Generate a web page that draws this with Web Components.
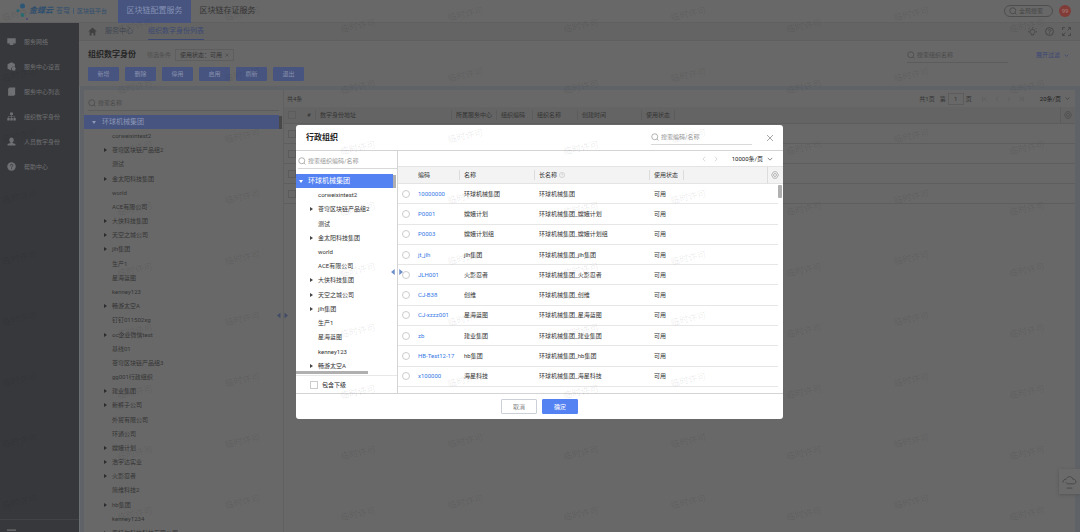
<!DOCTYPE html>
<html lang="zh-CN">
<head>
<meta charset="utf-8">
<title>组织数字身份</title>
<style>
  body { margin: 0; height: 100vh; overflow: hidden; background: #686868; color: #343434;
    font: 6px/14px Roboto, "Noto Sans CJK SC", sans-serif; }
</style>
</head>
<body>
<app-page></app-page>
<script>
const BASE = `<style>
  *, *::before { box-sizing: border-box; }
  button, input { font: inherit; color: inherit; margin: 0; padding: 0; border: 0; background: none; min-width: 0; }
  input:focus, button:focus { outline: none; }
  input[type=checkbox], input[type=radio] { appearance: none; display: block; width: 8px; height: 8px; border: 1px solid var(--box, #5c5c5c); flex: none; }
  input[type=radio] { border-radius: 50%; }
  a { color: inherit; text-decoration: none; }
  ul { list-style: none; margin: 0; padding: 0; }
  table { border-collapse: separate; border-spacing: 0; table-layout: fixed; width: 100%; }
  th, td { padding: 0; text-align: left; font-weight: 400; white-space: nowrap; }
</style>`;
const define = (name, render) => customElements.define(name, class extends HTMLElement {
  constructor() { super(); this.attachShadow({ mode: 'open' }); }
  connectedCallback() { this.shadowRoot.innerHTML = BASE + (typeof render === 'function' ? render(this) : render); }
});

const ICONS = {
  monitor: '<path fill="currentColor" d="M.5 2h15v9.500h-5l1.500 2.500H4l1.500-2.500h-5z"/>',
  cog: '<path fill="currentColor" d="M8 .5l6 3v5H9.500L7 12l1 3-7-3V4z"/><circle cx="12" cy="12" r="3.500" fill="currentColor"/>',
  doc: '<path fill="currentColor" d="M4 1h10.500v12l-2 2.500H2V3z"/>',
  org: '<path fill="currentColor" d="M5.500 1h5v4.500h-5zM.5 10.500h4.300V15H.5zM5.900 10.500h4.300V15H5.900zM11.300 10.500h4.300V15h-4.300z"/><path fill="none" stroke="currentColor" d="M8 5v6M2.500 11V8h11v3"/>',
  user: '<path fill="currentColor" d="M8 1c2.600 0 4 1.800 4 4.200 0 2.100-1 3.300-2.200 4.300v1L15 12.300V15H1v-2.700l5.200-1.800v-1C5 8.500 4 7.300 4 5.200 4 2.800 5.400 1 8 1z"/>',
  help: '<circle cx="8" cy="8" r="7.500" fill="currentColor"/><path fill="none" stroke="#37383b" stroke-width="1.500" d="M5.700 6.500c0-3.300 4.800-3 4.600-.3C10.200 8 8 8 8 10M8 11.200v1.600"/>',
  home: '<path fill="currentColor" d="M8 1l7.500 7H13v7H9.700v-4.500H6.300V15H3V8H.5z"/>',
  search: '<g fill="none" stroke="currentColor" stroke-width="1.500"><circle cx="7.500" cy="7.500" r="6"/><path d="M12 12l3 3"/></g>',
  bulb: '<g fill="none" stroke="currentColor" stroke-width="1.400"><path d="M6 12c-3.700-2-3-7.500 2-7.500s5.700 5.500 2 7.500v2H6zM8 .5v2M1.500 2.500L3 4M14.500 2.500L13 4M0 8.500h2M14 8.500h2"/></g>',
  ask: '<g fill="none" stroke="currentColor" stroke-width="1.400"><circle cx="8" cy="8" r="7"/><path d="M6 6.500c0-2.800 4-2.600 4-.3C10 8 8 8 8 9.700M8 11v1.500"/></g>',
  full: '<g fill="none" stroke="currentColor" stroke-width="1.500"><path d="M1 5V1h4M11 1h4v4M15 11v4h-4M5 15H1v-4M10 6l4-4M6 10l-4 4"/></g>',
  gear: '<g fill="none" stroke="currentColor" stroke-width="1.300"><path d="M5 1.500h6l4 6.500-4 6.500H5L1 8z"/><circle cx="8" cy="8" r="3"/></g>',
  down: '<path fill="none" stroke="currentColor" stroke-width="2" d="M2 5l6 6 6-6"/>',
  prev: '<path fill="none" stroke="currentColor" stroke-width="1.500" d="M11 2L5 8l6 6"/>',
  next: '<path fill="none" stroke="currentColor" stroke-width="1.500" d="M5 2l6 6-6 6"/>',
  first: '<path fill="none" stroke="currentColor" stroke-width="1.500" d="M12 2L6 8l6 6M2 2v12"/>',
  last: '<path fill="none" stroke="currentColor" stroke-width="1.500" d="M4 2l6 6-6 6M14 2v12"/>',
  close: '<path fill="none" stroke="currentColor" stroke-width="1.500" d="M2 2l12 12M14 2L2 14"/>',
  list: '<path fill="none" stroke="currentColor" stroke-width="2" d="M0 2h16M4 7h12M0 12h16"/>',
  cloud: '<path fill="none" stroke="currentColor" stroke-width="1" d="M1 9c0-3 2-3.500 3-3 1-4 7-4 7.500-.5 4-.5 4.500 5 1 5H6l-2-1.500M5 15h6"/>',
  split: '<path fill="currentColor" d="M5 4v8L0 8zM11 4v8l5-4z"/>'
};
define('ui-icon', el => `<style>:host{display:block;flex:none;width:var(--s,8px);height:var(--s,8px)}svg{display:block;width:100%;height:100%}</style>
  <svg viewBox="0 0 16 16" aria-hidden="true">${ICONS[el.getAttribute('name')]}</svg>`);

define('search-box', el => `<style>
  :host{display:flex;align-items:center;gap:2px;height:15px;border-bottom:1px solid var(--line,#5c5c5c);color:var(--hint,#4a4a4a)}
  input{flex:1;height:14px} input::placeholder{color:inherit;opacity:1}
  </style><ui-icon name="search"></ui-icon><input type="text" placeholder="${el.getAttribute('hint')}" aria-label="${el.getAttribute('hint')}">`);

define('app-header', `<style>
  :host{display:flex;height:23px;background:#686868;align-items:center;border-bottom:1px solid #606060;box-sizing:border-box}
  .brand{display:flex;align-items:center;width:118px;padding-left:15px;color:#304f6e;white-space:nowrap}
  svg{width:14px;height:21px;flex:none} b{font-size:8px;font-style:italic;margin-right:3px} .qiong{font-size:7px;margin-right:3px}
  .plat{border-left:1px solid #435a70;padding-left:3px;line-height:6px}
  nav{display:flex;align-self:stretch;flex:1}
  nav a{width:73px;font-size:8px;line-height:22px;height:23px;text-align:center}
  nav a.on{background:#47547f;color:#8390b4}
  label{display:flex;align-items:center;gap:2px;width:49px;height:12px;border:1px solid #4e4e4e;border-radius:6px;padding-left:4px;color:#444}
  input{width:30px;height:10px}input::placeholder{color:inherit;opacity:1}
  .me{width:12px;height:12px;line-height:12px;border-radius:50%;background:#823c38;color:#a37d7a;text-align:center;margin:0 9px 0 6px}
  </style>
  <div class="brand"><svg viewBox="0 0 14 21"><circle cx="7.500" cy="5" r="2.500" fill="#2c5674"/><circle cx="3" cy="9.500" r="1.600" fill="#2a6673"/><circle cx="7.500" cy="14" r="1.900" fill="#2a6d70"/><circle cx="12" cy="18" r="1" fill="#4b4674"/></svg>
  <b>金蝶云</b><span class="qiong">苍穹</span><span class="plat">区块链平台</span></div>
  <nav><a class="on" href="#">区块链配置服务</a><a href="#">区块链存证服务</a></nav>
  <label><ui-icon name="search"></ui-icon><input type="text" placeholder="全局搜索" aria-label="全局搜索"></label>
  <button class="me">99</button>`);

define('side-nav', `<style>
  :host{display:flex;flex-direction:column;width:79px;background:#37383b;color:#6f7073;box-sizing:border-box;padding-top:6px}
  ul{flex:1} a{display:flex;align-items:center;gap:8px;height:25px;padding-left:7px} ui-icon{--s:9px}
  .fold{display:flex;height:13px;border-top:1px solid #424346;padding:9px 0 0 7px}
  </style><ul>${[['monitor','服务网络'],['cog','服务中心设置'],['doc','服务中心列表'],['org','组织数字身份'],['user','人员数字身份'],['help','帮助中心']]
    .map(([i,t]) => `<li><a href="#"><ui-icon name="${i}"></ui-icon>${t}</a></li>`).join('')}</ul>
  <button class="fold" aria-label="收起"><ui-icon name="list"></ui-icon></button>`);

define('crumb-bar', `<style>
  :host{display:flex;align-items:center;height:18px;background:#646464;padding:0 9px;border-bottom:1px solid #606060;box-sizing:border-box;font-size:7px;color:#3f4042}
  nav{display:flex;align-items:center;flex:1} ui-icon{--s:9px;color:#404040} nav a{margin-left:8px;line-height:16px;height:17px;color:#404653}
  nav a.on{margin-left:15px;color:#3b4974;border-bottom:1px solid #3b4974}
  .tools{display:flex;gap:8px}
  </style><nav><ui-icon name="home"></ui-icon><a href="#">服务中心</a><a class="on" href="#">组织数字身份列表</a></nav>
  <div class="tools"><ui-icon name="bulb"></ui-icon><ui-icon name="ask"></ui-icon><ui-icon name="full"></ui-icon></div>`);

define('title-bar', `<style>
  :host{display:block;height:45px;box-sizing:border-box;padding:7px 9px 0;background:#686868}
  .top{display:flex;align-items:center;height:14px} h1{font-size:8px;margin:0 11px 0 0;color:#262626}
  .cond{color:#4e4e4e;margin-right:4px} .chip{border:1px solid #5e5e5e;height:12px;line-height:10px;padding:0 4px;display:flex;gap:3px}
  .chip ui-icon{--s:4px;margin-top:3px}
  search-box{width:101px;margin-left:auto}
  .more{display:flex;align-items:center;gap:4px;margin:0 2px 0 28px;color:#3a4576} .more ui-icon{--s:5px}
  .acts{display:flex;gap:6px;margin-top:5px} .acts button{width:31px;height:14px;background:#47547f;color:#8791ae;line-height:14px;border-radius:1px}
  </style><div class="top"><h1>组织数字身份</h1><span class="cond">筛选条件</span><button class="chip">使用状态：可用 <ui-icon name="close"></ui-icon></button>
  <search-box hint="搜索组织名称"></search-box><a class="more" href="#">展开过滤<ui-icon name="down"></ui-icon></a></div>
  <div class="acts">${['新增','删除','停用','启用','刷新','退出'].map(t => `<button>${t}</button>`).join('')}</div>`);

/* A leading ">" marks a branch that can be opened. */
const NODES = ['corweixintest2','>苍穹区块链产品组2','测试','>金太阳科技集团','world','ACE有限公司','>大侠科技集团','>天空之城公司','>jlh集团','生产1','星海蓝图','kenney123','>畅游太空A',
  '钉钉011502xg','>oc企业微信test','基线01','苍穹区块链产品组3','gg001行政组织','>建业集团','>新裤子公司','外贸有限公司','环通公司','>嫦娥计划','>浩宇达实业','>火影忍者','简维科技2','>hb集团','kenney1234','>恩特尔科技科技有限公司'];
define('org-tree', el => `<style>
  :host{display:flex;flex-direction:column;min-height:0}
  .root{display:flex;align-items:center;gap:var(--rootgap,6px);height:14px;margin-right:4px;padding-left:var(--rootpad,8px);background:var(--sel);color:var(--selfg);font-size:7px;position:relative;flex:none}
  .root i{border:2px solid transparent;border-top:3px solid;border-bottom:0}
  .bar{position:absolute;right:-3px;top:1px;width:3px;height:13px;background:var(--thumb)}
  ul{height:var(--listh,101%);display:grid;grid-auto-rows:1fr}
  .hold{flex:1;min-height:0}
  li{display:flex;align-items:center;padding-left:var(--pad,20px);white-space:nowrap;min-height:0;line-height:1}
  li i{width:8px;height:4px} li.sub i::before{content:"";display:block;width:0;height:4px;border:2px solid transparent;border-left:3px solid #444;border-left-color:var(--tri,#2c2c2c);border-right:0}
  </style><div class="root"><i></i><span>环球机械集团</span><div class="bar"></div></div>
  <div class="hold"><ul>${NODES.slice(0, +el.getAttribute('count')).map(n => n[0] === '>' ? `<li class="sub"><i></i>${n.slice(1)}</li>` : `<li><i></i>${n}</li>`).join('')}</ul></div>`);

define('id-table', `<style>
  :host{display:block;background:#686868;border-left:1px solid #606060}
  .pager{display:flex;align-items:center;height:17px;padding:0 5px 0 3px;gap:2px} .pager>:first-child{margin-right:auto}
  .pager input{width:16px;height:12px;border:1px solid #5c5c5c;text-align:center} .pager .p{margin-right:3px}
  .nav{display:flex;gap:6px;margin:0 14px 0 8px;color:#595959} .nav ui-icon{--s:6px}
  .size{display:flex;align-items:center;gap:4px;color:#1f1f1f} .size ui-icon{--s:5px;color:#3a3a3a}
  th{height:17px;background:#646464;border-bottom:1px solid #5d5d5d} th:not(:first-child):not(.end){padding-left:4px}
  th+th:not(.end)::after{content:"";float:right;height:10px;margin-top:2px;border-right:1px solid #5c5c5c}
  th:nth-last-child(2)::after{display:none}
  th.end{border-left:1px solid #5c5c5c;padding-left:3px;color:#484848} td{height:20px;border-bottom:1px solid #5e5e5e} td input,th input{margin-left:4px!important}
  </style><div class="pager"><span>共4条</span><span class="p">共1页</span><label for="pg">第</label><input id="pg" value="1"><span>页</span>
  <div class="nav"><ui-icon name="first"></ui-icon><ui-icon name="prev"></ui-icon><ui-icon name="next"></ui-icon><ui-icon name="last"></ui-icon></div>
  <button class="size">20条/页<ui-icon name="down"></ui-icon></button></div>
  <table><colgroup><col width="19"><col width="13"><col width="136"><col width="45"><col width="36"><col width="45"><col width="64"><col width="33"><col><col width="15"></colgroup>
  <thead><tr><th><input type="checkbox" aria-label="全选"></th><th>#</th><th>数字身份地址</th><th>所属服务中心</th><th>组织编码</th><th>组织名称</th><th>创建时间</th><th>使用状态</th><th></th><th class="end"><ui-icon name="gear"></ui-icon></th></tr></thead>
  <tbody>${'<tr><td><input type="checkbox" aria-label="选择"></td><td colspan="9"></td></tr>'.repeat(4)}</tbody></table>`);

const ROWS = [['10000000','环球机械集团'],['P0001','嫦娥计划'],['P0003','嫦娥计划组'],['jt_jlh','jlh集团'],['JLH001','火影忍者'],['CJ-B38','创维'],['CJ-xzzz001','星海蓝图'],['zb','建业集团'],['HB-Test12-17','hb集团'],['x100000','海星科技']];
define('org-dialog', `<style>
  :host{display:flex;flex-direction:column;width:45%;min-width:487px;height:294px;background:#fff;border-radius:3px;color:#333;box-sizing:border-box;
    --line:#d9d9d9;--hint:#999;--box:#ccc;--sel:#5582f3;--selfg:#fff;--thumb:#b0b0b0;--rootpad:3px;--rootgap:5px;--pad:14px;--tri:#444}
  header{display:flex;align-items:center;height:26px;border-bottom:1px solid #d4d4d4;padding:0 9px 0 10px}
  h2{font-size:8px;margin:0;flex:1;color:#222} header search-box{width:101px;margin-right:14px} header ui-icon{color:#888}
  main{flex:1;display:flex;min-height:0}
  aside{width:102px;display:flex;flex-direction:column;border-right:1px solid #d4d4d4;position:relative}
  aside search-box{margin:3px 0 5px 2px} org-tree{flex:1}
  .hbar{width:72px;height:3px;background:#b0b0b0;flex:none} .inc{display:flex;align-items:center;gap:4px;height:18px;border-top:1px solid #e8e8e8;padding-left:14px;margin-top:1px;flex:none;color:#222}
  .split{position:absolute;right:-6px;top:115px;--s:12px;color:#6d8fc9;z-index:1}
  section{flex:1;min-width:0;display:flex;flex-direction:column;padding-bottom:6px}
  .pager{display:flex;justify-content:flex-end;align-items:center;gap:6px;height:15px;padding-right:10px;color:#bbb}
  .pager ui-icon{--s:6px} .size{display:flex;align-items:center;gap:4px;margin-left:7px;color:#222} .size ui-icon{color:#666}
  .wrap{flex:1;min-height:0;position:relative} .wrap table{height:100%}
  th{height:18px;background:#f3f3f3;border:solid #e4e4e4;border-width:1px 0;color:#333}
  th:nth-child(n+2):nth-child(-n+5)::after{content:"";float:right;height:10px;margin-top:2px;border-right:1px solid #dcdcdc}
  th.q ui-icon{--s:6px;display:inline-block;vertical-align:-1px;margin-left:2px;color:#bbb}
  th.g{border-left:1px solid #dcdcdc;padding-left:3px;color:#999}
  td{border-bottom:1px solid #e6e6e6} td.n{border:0} th:nth-child(n+2):not(.g),td+td{padding-left:4px} td input{margin-left:4px!important}
  td a{color:#3478e5}
  .thumb{position:absolute;right:1px;top:19px;width:4px;height:13px;background:#b0b0b0;border-radius:1px}
  footer{height:26px;border-top:1px solid #d4d4d4;display:flex;justify-content:center;gap:5px;padding-top:5px;flex:none}
  footer button{width:36px;height:15px;line-height:13px;border:1px solid #ccd0d8;border-radius:1px;color:#888} footer .ok{background:#5582f3;border-color:#5582f3;color:#fff}
  </style>
  <header><h2>行政组织</h2><search-box hint="搜索编码/名称"></search-box><button aria-label="关闭"><ui-icon name="close"></ui-icon></button></header>
  <main><aside><search-box hint="搜索组织编码/名称"></search-box><org-tree count="13"></org-tree>
    <div class="hbar"></div><label class="inc"><input type="checkbox">包含下级</label><ui-icon class="split" name="split"></ui-icon></aside>
  <section><div class="pager"><ui-icon name="prev"></ui-icon><ui-icon name="next"></ui-icon><button class="size">10000条/页<ui-icon name="down"></ui-icon></button></div>
  <div class="wrap"><table><colgroup><col width="16"><col width="46"><col width="75"><col width="115"><col width="34"><col><col width="11"><col width="5"></colgroup>
  <thead><tr><th></th><th>编码</th><th>名称</th><th class="q">长名称<ui-icon name="ask"></ui-icon></th><th>使用状态</th><th></th><th class="g" colspan="2"><ui-icon name="gear"></ui-icon></th></tr></thead>
  <tbody>${ROWS.map(([c,n],i) => `<tr><td><input type="radio" name="org" aria-label="${n}"></td><td><a href="#">${c}</a></td><td>${n}</td><td>环球机械集团${i ? '_' + n : ''}</td><td>可用</td><td colspan="2"></td><td class="n"></td></tr>`).join('')}</tbody></table>
  <div class="thumb"></div></div></section></main>
  <footer><button>取消</button><button class="ok">确定</button></footer>`);

define('water-mark', `<style>
  :host{position:absolute;inset:0;overflow:hidden;pointer-events:none;z-index:9}
  div{display:grid;grid-template-columns:repeat(5,111px 112px);grid-auto-rows:61px;margin-left:-36px;width:max-content}
  span{font-size:9px;line-height:12px;text-align:center;color:rgba(0,0,0,.09);transform:rotate(-12deg);height:12px;margin:8px 0 0}
  span:nth-child(even){margin:20px 0 0 8px}
  </style><div>${'<span>临时许可</span>'.repeat(10 * 9)}</div>`);

define('app-page', `<style>
  :host{display:flex;flex-direction:column;height:100vh;position:relative;overflow:hidden;--sel:#47547f;--selfg:#8c96b5;--thumb:#484848}
  .body{flex:1;display:flex;min-height:0} .work{flex:1;min-width:0;display:flex;flex-direction:column}
  .panes{flex:1;display:flex;min-height:0;background:#5f6367;padding:4px 5px 0 4px;border-left:1px solid #6c6f72}
  .left{width:199px;background:#686868;display:flex;flex-direction:column;min-height:0;position:relative}
  .left search-box{margin:6px 4px 4px} .left org-tree{flex:1;--listh:102%}
  .split{position:absolute;right:-5px;top:220px;--s:11px;color:#414b66}
  id-table{flex:1;min-width:0}
  .mask{position:absolute;inset:0;display:flex;justify-content:center;align-items:flex-start;padding:125px 1px 0 0}
  .float{position:absolute;right:0;bottom:38px;width:21px;height:25px;background:#6a6a6a;box-shadow:0 1px 3px #555;color:#484848;padding-left:3px;--s:15px}
  </style><app-header></app-header><div class="body"><side-nav></side-nav><div class="work"><crumb-bar></crumb-bar><title-bar></title-bar>
  <div class="panes"><div class="left"><search-box hint="搜索名称"></search-box><org-tree count="29"></org-tree><ui-icon class="split" name="split"></ui-icon></div><id-table></id-table></div></div></div>
  <button class="float" aria-label="云助手"><ui-icon name="cloud"></ui-icon></button>
  <div class="mask"><org-dialog role="dialog" aria-label="行政组织"></org-dialog></div><water-mark></water-mark>`);
</script>
</body>
</html>
